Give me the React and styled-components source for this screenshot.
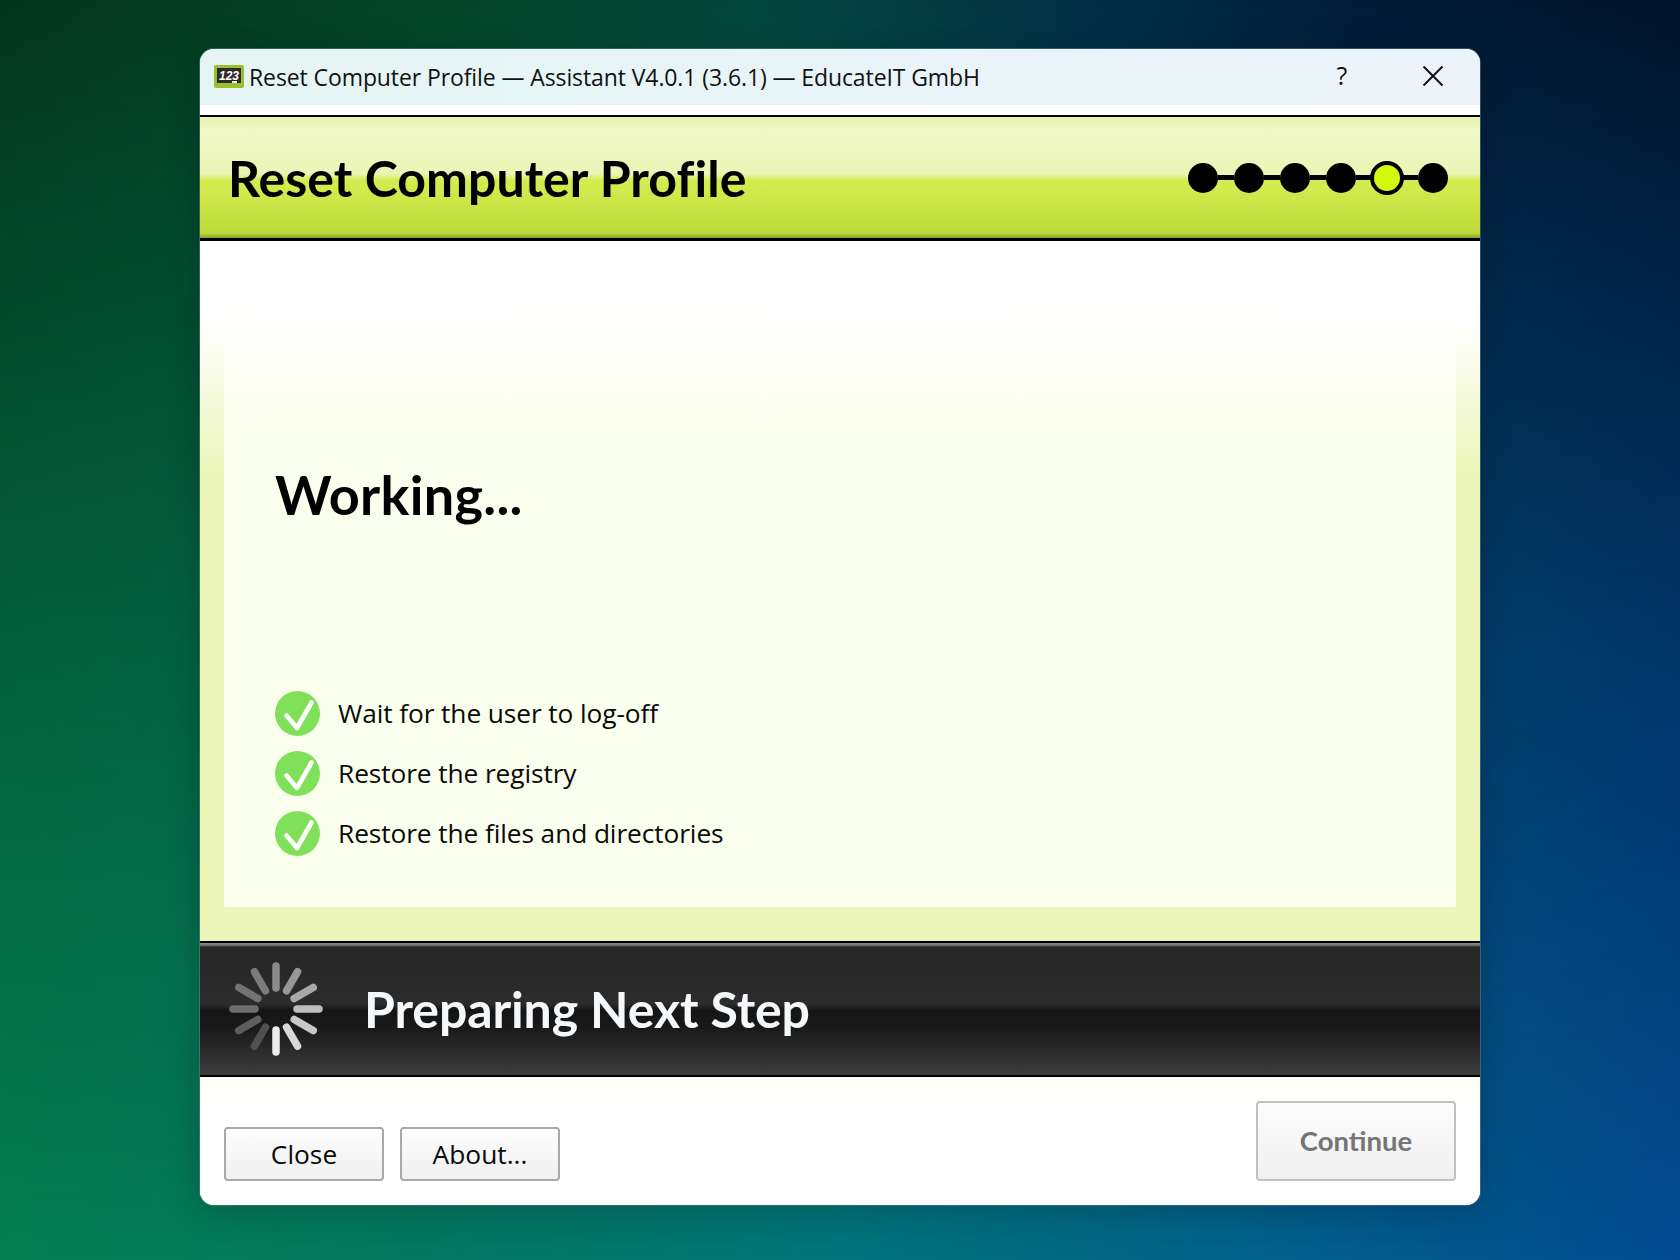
import styled, { createGlobalStyle } from "styled-components";

const GlobalStyle = createGlobalStyle`
  html, body { margin: 0; padding: 0; }
  body { font-family: "Open Sans", "Liberation Sans", sans-serif; color: #000; }
  * { box-sizing: border-box; }
`;

const Desktop = styled.div`
  position: relative;
  width: 1680px;
  height: 1260px;
  overflow: hidden;
  padding-top: 49px;
  display: flex;
  justify-content: center;
  align-items: flex-start;
  background: linear-gradient(90deg, #047e52 0%, #04785f 25%, #01747a 50%, #03608a 75%, #034c92 100%);
  &::before {
    content: "";
    position: absolute;
    inset: 0;
    background: linear-gradient(90deg, #03351e 0%, #034426 25%, #04473c 45%, #022f46 65%, #011c38 80%, #00142a 100%);
    mask-image: linear-gradient(180deg, #000 0%, rgba(0, 0, 0, .42) 50%, transparent 100%);
  }
`;

const Window = styled.div`
  position: relative;
  width: 1280px;
  height: 1156px;
  border-radius: 14px;
  overflow: hidden;
  background: #fff;
  display: flex;
  flex-direction: column;
  box-shadow: 0 0 0 1px rgba(110, 140, 150, .45), 0 4px 34px rgba(0, 0, 0, .22);
`;

const TitleBar = styled.div`
  height: 56px;
  flex: none;
  display: flex;
  align-items: center;
  padding-left: 14px;
  background: linear-gradient(90deg, #e4f5f3 0%, #e8f5f8 50%, #ecf3f9 100%);
`;

const TitleText = styled.span`
  margin-left: 5px;
  font-size: 23px;
  letter-spacing: -0.1px;
  color: #111;
  flex: 1;
  white-space: nowrap;
`;

const HelpGlyph = styled.span`
  font-size: 25px;
  color: #111;
  width: 30px;
  text-align: center;
  margin-right: 65px;
  margin-top: -4px;
`;

const CloseGlyph = styled.svg`
  width: 22px;
  height: 22px;
  margin-right: 36px;
  margin-top: -3px;
`;

const TitleGap = styled.div`
  height: 10px;
  flex: none;
  background: #fff;
`;

const Header = styled.div`
  height: 126px;
  flex: none;
  border-top: 2px solid #000;
  border-bottom: 3px solid #000;
  display: flex;
  align-items: center;
  justify-content: space-between;
  padding: 0 32px 0 28px;
  background: linear-gradient(180deg, #e6f2b0 0%, #f0f8c6 12%, #eaf5b6 47%, #d4ec50 52%, #cce648 70%, #bcd93a 96%, #8ca02c 100%);
`;

const HeaderTitle = styled.h1`
  margin: 0;
  font-family: Lato, "Open Sans", sans-serif;
  font-weight: 700;
  font-size: 50px;
  letter-spacing: 0.05px;
  line-height: 1;
`;

const Steps = styled.div`
  display: flex;
  align-items: center;
`;

const Dot = styled.div`
  width: ${p => (p.$active ? "34px" : "30px")};
  height: ${p => (p.$active ? "34px" : "30px")};
  margin: ${p => (p.$active ? "0 -2px" : "0")};
  border-radius: 50%;
  flex: none;
  background: ${p => (p.$active ? "#d4f90f" : "#000")};
  border: ${p => (p.$active ? "4px solid #000" : "0")};
`;

const Link = styled.div`
  width: 16px;
  height: 5px;
  background: #000;
  flex: none;
`;

const Body = styled.div`
  flex: none;
  height: 700px;
  padding: 0 24px 34px 24px;
  display: flex;
  background: linear-gradient(180deg, #fff 0, #fff 80px, #ecf6ba 230px, #ecf6ba 100%);
`;

const Panel = styled.div`
  flex: 1;
  display: flex;
  flex-direction: column;
  padding: 0 0 51px 51px;
  background: linear-gradient(180deg, #fff 0, #fff 60px, #fafeec 200px, #fbffee 100%);
`;

const WorkingTitle = styled.h2`
  margin: 222px 0 0;
  font-family: Lato, "Open Sans", sans-serif;
  font-weight: 700;
  font-size: 54px;
  letter-spacing: 0.3px;
  line-height: 64px;
`;

const TaskList = styled.div`
  margin-top: auto;
  display: flex;
  flex-direction: column;
  gap: 15px;
`;

const Task = styled.div`
  display: flex;
  align-items: center;
  gap: 18px;
  height: 45px;
  font-size: 26.3px;
  letter-spacing: -0.1px;
  color: #0a0a0a;
`;

const TaskLabel = styled.span`
  margin-top: -2px;
`;

const Status = styled.div`
  height: 136px;
  flex: none;
  border-top: 2px solid #000;
  border-bottom: 2px solid #000;
  display: flex;
  align-items: center;
  padding-left: 29px;
  background: linear-gradient(180deg, #8a8a8a 0, #777 2px, #262626 4px, #2c2c2c 46%, #151515 51%, #1a1a1a 65%, #3d3d3d 100%);
`;

const StatusText = styled.div`
  margin-left: 41px;
  font-family: Lato, "Open Sans", sans-serif;
  font-weight: 700;
  font-size: 50px;
  letter-spacing: -0.1px;
  color: #f4f8fb;
  line-height: 1;
`;

const Footer = styled.div`
  flex: 1;
  display: flex;
  align-items: flex-end;
  gap: 16px;
  padding: 0 24px 24px 24px;
  background: linear-gradient(180deg, #fdfdf6 0, #fff 30px);
`;

const Button = styled.button`
  width: ${p => (p.$primary ? "200px" : "160px")};
  height: ${p => (p.$primary ? "80px" : "54px")};
  margin-left: ${p => (p.$primary ? "auto" : "0")};
  border: 2px solid ${p => (p.$primary ? "#c0c0c0" : "#a9a9a9")};
  border-radius: 4px;
  background: linear-gradient(180deg, #fdfdfd 0%, #f0f0f0 100%);
  font-family: ${p => (p.$primary ? 'Lato, "Open Sans", sans-serif' : '"Open Sans", sans-serif')};
  font-weight: ${p => (p.$primary ? 700 : 400)};
  font-size: ${p => (p.$primary ? "27.5px" : "26.3px")};
  color: ${p => (p.$primary ? "#757575" : "#0a0a0a")};
  padding: 0 0 ${p => (p.$primary ? "2px" : "0")};
`;

const AppIcon = () => (
  <svg width="30" height="24" viewBox="0 0 30 24">
    <rect x="0" y="0" width="30" height="23" rx="2" fill="#9cbf2e" />
    <rect x="3" y="3" width="24" height="15" fill="#2b2b2b" />
    <text x="15" y="15" textAnchor="middle" fontFamily="Liberation Sans, sans-serif" fontSize="12" fontWeight="700" fontStyle="italic" fill="#fff">123</text>
    <rect x="18" y="16" width="5" height="2" fill="#eee" />
  </svg>
);

const CheckIcon = () => (
  <svg width="45" height="45" viewBox="0 0 45 45" style={{ flex: "none" }}>
    <circle cx="22.5" cy="22.5" r="22.5" fill="#80e05a" />
    <path d="M11.5 24.5 L22 37 L36.5 11.5" fill="none" stroke="#fff" strokeWidth="4.6" strokeLinecap="round" strokeLinejoin="round" />
  </svg>
);

// clockwise from twelve o'clock
const spokeColors = ["#8a8a8a", "#979797", "#a8a8a8", "#bdbdbd", "#c8c8c8", "#d8d8d8", "#ececec", "#505050", "#5e5e5e", "#6e6e6e", "#737373", "#7c7c7c"];

const Spinner = () => (
  <svg width="94" height="94" viewBox="-47 -47 94 94" style={{ flex: "none" }}>
    {spokeColors.map((c, i) => (
      <line key={i} x1="0" y1="-21" x2="0" y2="-43" stroke={c} strokeWidth="7.5" strokeLinecap="round" transform={`rotate(${i * 30})`} />
    ))}
  </svg>
);

const tasks = ["Wait for the user to log-off", "Restore the registry", "Restore the files and directories"];

export default function App() {
  return (
    <>
      <GlobalStyle />
      <Desktop>
        <Window>
          <TitleBar>
            <AppIcon />
            <TitleText>Reset Computer Profile — Assistant V4.0.1 (3.6.1) — EducateIT GmbH</TitleText>
            <HelpGlyph>?</HelpGlyph>
            <CloseGlyph viewBox="0 0 22 22">
              <path d="M1.5 1.5 L20.5 20.5 M20.5 1.5 L1.5 20.5" stroke="#111" strokeWidth="2" fill="none" />
            </CloseGlyph>
          </TitleBar>
          <TitleGap />
          <Header>
            <HeaderTitle>Reset Computer Profile</HeaderTitle>
            <Steps>
              <Dot /><Link /><Dot /><Link /><Dot /><Link /><Dot /><Link /><Dot $active /><Link /><Dot />
            </Steps>
          </Header>
          <Body>
            <Panel>
              <WorkingTitle>Working...</WorkingTitle>
              <TaskList>
                {tasks.map(t => (
                  <Task key={t}><CheckIcon /><TaskLabel>{t}</TaskLabel></Task>
                ))}
              </TaskList>
            </Panel>
          </Body>
          <Status>
            <Spinner />
            <StatusText>Preparing Next Step</StatusText>
          </Status>
          <Footer>
            <Button>Close</Button>
            <Button>About...</Button>
            <Button $primary>Continue</Button>
          </Footer>
        </Window>
      </Desktop>
    </>
  );
}
